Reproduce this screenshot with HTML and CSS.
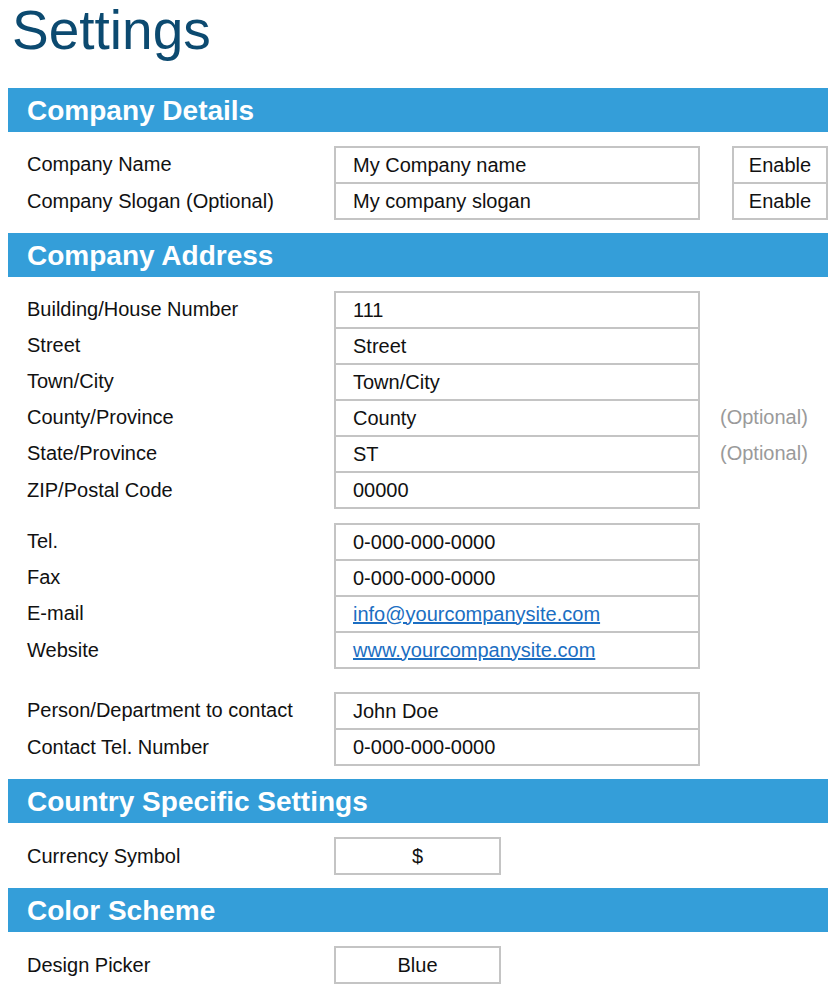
FILE: index.html
```html
<!DOCTYPE html>
<html lang="en">
<head>
    <meta charset="UTF-8">
    <title>Settings</title>
    <link rel="stylesheet" href="styles.css">
</head>
<body>
    <h1 class="page-title">Settings</h1>

    <section class="panel">
        <h2 class="panel-head">Company Details</h2>
        <div class="panel-body">
            <div class="group">
                <div class="row">
                    <span class="label">Company Name</span>
                    <span class="field">My Company name</span>
                    <span class="toggle">Enable</span>
                </div>
                <div class="row">
                    <span class="label">Company Slogan (Optional)</span>
                    <span class="field">My company slogan</span>
                    <span class="toggle">Enable</span>
                </div>
            </div>
        </div>
    </section>

    <section class="panel">
        <h2 class="panel-head">Company Address</h2>
        <div class="panel-body">
            <div class="group">
                <div class="row">
                    <span class="label">Building/House Number</span>
                    <span class="field">111</span>
                </div>
                <div class="row">
                    <span class="label">Street</span>
                    <span class="field">Street</span>
                </div>
                <div class="row">
                    <span class="label">Town/City</span>
                    <span class="field">Town/City</span>
                </div>
                <div class="row">
                    <span class="label">County/Province</span>
                    <span class="field">County</span>
                    <span class="hint">(Optional)</span>
                </div>
                <div class="row">
                    <span class="label">State/Province</span>
                    <span class="field">ST</span>
                    <span class="hint">(Optional)</span>
                </div>
                <div class="row">
                    <span class="label">ZIP/Postal Code</span>
                    <span class="field">00000</span>
                </div>
            </div>

            <div class="group">
                <div class="row">
                    <span class="label">Tel.</span>
                    <span class="field">0-000-000-0000</span>
                </div>
                <div class="row">
                    <span class="label">Fax</span>
                    <span class="field">0-000-000-0000</span>
                </div>
                <div class="row">
                    <span class="label">E-mail</span>
                    <span class="field"><a href="mailto:info@yourcompanysite.com">info@yourcompanysite.com</a></span>
                </div>
                <div class="row">
                    <span class="label">Website</span>
                    <span class="field"><a href="#">www.yourcompanysite.com</a></span>
                </div>
            </div>

            <div class="group group-wide">
                <div class="row">
                    <span class="label">Person/Department to contact</span>
                    <span class="field">John Doe</span>
                </div>
                <div class="row">
                    <span class="label">Contact Tel. Number</span>
                    <span class="field">0-000-000-0000</span>
                </div>
            </div>
        </div>
    </section>

    <section class="panel">
        <h2 class="panel-head">Country Specific Settings</h2>
        <div class="panel-body">
            <div class="group">
                <div class="row">
                    <span class="label">Currency Symbol</span>
                    <span class="field field-short">$</span>
                </div>
            </div>
        </div>
    </section>

    <section class="panel">
        <h2 class="panel-head">Color Scheme</h2>
        <div class="panel-body">
            <div class="group">
                <div class="row">
                    <span class="label">Design Picker</span>
                    <span class="field field-short">Blue</span>
                </div>
            </div>
        </div>
    </section>
</body>
</html>
```

FILE: styles.css
```css
/* settings sheet: blue section bars over label / value rows */
:root {
    --bar: #349ed9;
    --line: #c4c4c4;
}

body {
    margin: 8px;
    font-family: "Liberation Sans", Arial, sans-serif;
    font-size: 20px;
    color: #111;
    background: #fff;
}

.page-title {
    margin: 0 0 36px 4px;
    font-size: 55px;
    font-weight: normal;
    line-height: 44px;
    color: #0c4a70;
}

.panel-head {
    margin: 0;
    height: 44px;
    padding-left: 19px;
    background: var(--bar);
    color: #fff;
    font-size: 28px;
    font-weight: bold;
    line-height: 46px;
}

.panel-body {
    padding: 14px 0 13px;
}

.group + .group {
    margin-top: 14px;
}

.group-wide {
    margin-top: 23px !important;
}

.row {
    display: grid;
    grid-template-columns: 307px 366px 1fr;
    align-items: stretch;
    padding-left: 19px;
    height: 36px;
}

.group .row:last-child {
    height: 38px;
}

.label {
    display: flex;
    align-items: center;
}

.field,
.toggle {
    box-sizing: border-box;
    display: flex;
    align-items: center;
    padding-left: 17px;
    border: 2px solid var(--line);
    border-bottom: none;
}

.row:last-child .field,
.row:last-child .toggle {
    border-bottom: 2px solid var(--line);
}

.field-short {
    width: 167px;
    padding-left: 0;
    justify-content: center;
}

.toggle {
    width: 96px;
    margin-left: 32px;
    padding-left: 0;
    justify-content: center;
}

.hint {
    display: flex;
    align-items: center;
    margin-left: 20px;
    color: #9a9a9a;
}

a {
    color: #1b6ec2;
    text-decoration: underline;
}
```
